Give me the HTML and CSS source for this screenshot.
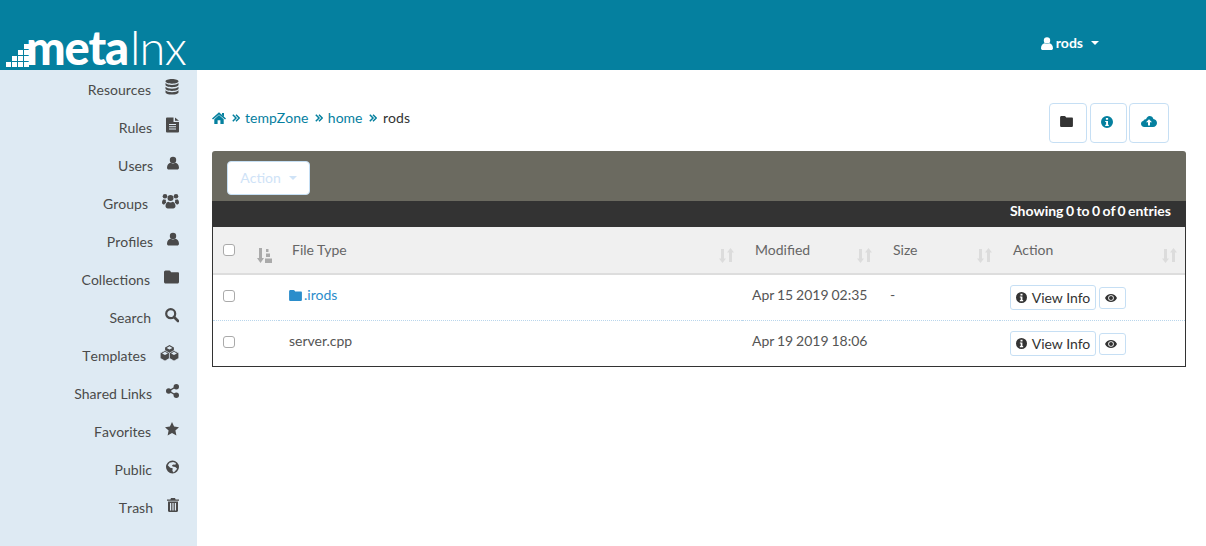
FILE: index.html
```html
<!DOCTYPE html>
<html lang="en">
<head>
<meta charset="utf-8">
<title>Metalnx</title>
<link rel="stylesheet" href="styles.css">
</head>
<body>
<svg class="defs" aria-hidden="true">
  <symbol id="i-db" viewBox="0 0 14 16"><path d="M7 0C3.2 0 .5 1 .5 2.3S3.2 4.7 7 4.7s6.500-1.100 6.500-2.400S10.800 0 7 0zM.5 4v1.800C.5 7.100 3.200 8.200 7 8.200s6.500-1.100 6.500-2.400V4C12.500 5.300 10 6 7 6S1.500 5.300.5 4zm0 3.700v1.800c0 1.300 2.700 2.400 6.500 2.400s6.500-1.100 6.500-2.400V7.700c-1 1.300-3.500 2-6.500 2s-5.500-.7-6.500-2zm0 3.600v1.900c0 1.300 2.700 2.400 6.500 2.400s6.500-1.100 6.500-2.400v-1.900c-1 1.300-3.500 2-6.500 2s-5.500-.7-6.500-2z"/></symbol>
  <symbol id="i-doc" viewBox="0 0 13 15"><path fill-rule="evenodd" d="M1 0h6.500v4.500H13V14a1 1 0 0 1-1 1H1a1 1 0 0 1-1-1V1a1 1 0 0 1 1-1zm8 0l4 3.200H9zM3 6.500v1h7v-1zm0 2.300v1h7v-1zm0 2.300v1h7v-1z"/></symbol>
  <symbol id="i-user" viewBox="0 0 12 13"><circle cx="6" cy="3.400" r="3.200"/><path d="M0 11.200C0 8.300 1.800 6.700 3.600 6.300c1.400 1 3.400 1 4.800 0C10.200 6.700 12 8.300 12 11.200c0 1.100-.8 1.800-1.800 1.800H1.800C.8 13 0 12.300 0 11.200z"/></symbol>
  <symbol id="i-group" viewBox="0 0 17 15"><circle cx="3" cy="2.700" r="2.300"/><circle cx="14" cy="2.700" r="2.300"/><circle cx="8.500" cy="4.500" r="3"/><path d="M0 9c0-2 1-3 2-3.300.6.500 1.200.7 2 .6-.3 1-.3 2 .3 2.900C3.300 9.800 2.700 10.300 2.300 11 1 11 0 10.500 0 9zM17 9c0-2-1-3-2-3.300-.6.500-1.200.7-2 .6.300 1 .3 2-.3 2.900 1 .6 1.600 1.100 2 1.800 1.300 0 2.300-.5 2.300-2zM3.500 12.500c0-2.300 1.300-3.800 2.700-4.300 1.400 1 3.200 1 4.600 0 1.400.5 2.700 2 2.700 4.300 0 1.500-1 2.500-2.300 2.500H5.800c-1.300 0-2.300-1-2.300-2.500z"/></symbol>
  <symbol id="i-folder" viewBox="0 0 14 12"><path d="M1.500 0h3.300c.7 0 1.200.4 1.500 1l.4.600h6.300c.5 0 1 .5 1 1v8c0 .8-.6 1.400-1.400 1.400H1.500C.7 12 0 11.400 0 10.600V1.500C0 .7.700 0 1.500 0z"/></symbol>
  <symbol id="i-search" viewBox="0 0 14 14"><circle cx="5.700" cy="5.700" r="4.500" fill="none" stroke="currentColor" stroke-width="2.200"/><path d="M9 9l4 4" stroke="currentColor" stroke-width="2.600" stroke-linecap="round"/></symbol>
  <symbol id="i-cubes" viewBox="0 0 19 16">
    <path d="M9.500 0l4.400 2.500v5L9.500 10 5.100 7.500v-5z"/>
    <path d="M5 5.500l4.600 2.600v5.200L5 16 .2 13.300V8.100z" stroke="#deeaf3" stroke-width=".7"/>
    <path d="M14 5.500l4.800 2.600v5.200L14 16l-4.600-2.700V8.100z" stroke="#deeaf3" stroke-width=".7"/>
    <path d="M9.500 1.300l2.900 1.600-2.900 1.700-2.900-1.700zM5 6.800l2.900 1.600L5 10.100 2.100 8.400zM14 6.800l2.900 1.600-2.900 1.700-2.900-1.700z" fill="#deeaf3"/>
  </symbol>
  <symbol id="i-share" viewBox="0 0 13 14"><circle cx="2.700" cy="7" r="2.700"/><circle cx="10.300" cy="2.700" r="2.700"/><circle cx="10.300" cy="11.300" r="2.700"/><path d="M2.700 7l7.600-4.300M2.700 7l7.600 4.300" stroke="currentColor" stroke-width="1.400"/></symbol>
  <symbol id="i-star" viewBox="0 0 14 14"><path d="M7 0l2.100 4.600 4.900.6-3.600 3.400 1 4.900L7 11.100 2.600 13.500l1-4.900L0 5.200l4.900-.6z"/></symbol>
  <symbol id="i-globe" viewBox="0 0 13 13"><path fill-rule="evenodd" d="M6.500 0a6.500 6.500 0 1 1 0 13 6.500 6.500 0 0 1 0-13zM3.600 2.200L1.800 4.700l2.400 2.500 2.500.6-.3 2.600 1.400 1.500 3.400-3.700-1.900-1.700-2.700-.6-.6-1.100 1.500-.9 1.900.4.500-1.700-2.800-1z"/></symbol>
  <symbol id="i-trash" viewBox="0 0 12 14"><path fill-rule="evenodd" d="M4 0h4l.6 1.500H12v1.300H0V1.500h3.400zM1 3.600h10v9.200c0 .7-.5 1.200-1.200 1.200H2.200C1.500 14 1 13.500 1 12.800zm2 1.500v7.300h1.200V5.100zm2.400 0v7.300h1.200V5.100zm2.400 0v7.300H9V5.100z"/></symbol>
  <symbol id="i-home" viewBox="0 0 14 12"><path d="M7 .3l7 6.200-1 1.100-6-5.200-6 5.200-1-1.100zM2.300 7.200L7 3.100l4.700 4.100V12H8.400V8.300H5.600V12H2.300zM10 1h2v3.500l-2-1.700z"/></symbol>
  <symbol id="i-angles" viewBox="0 0 8 8"><path d="M.8.800L4 4 .8 7.200M4 .8L7.200 4 4 7.200" fill="none" stroke="currentColor" stroke-width="1.500"/></symbol>
  <symbol id="i-info" viewBox="0 0 12 12"><path fill-rule="evenodd" d="M6 0a6 6 0 1 1 0 12A6 6 0 0 1 6 0zM4.900 2v1.800h2.200V2zM4.200 5v1.100h.9v2.700h-.9V10h3.600V8.800h-.8V5z"/></symbol>
  <symbol id="i-upload" viewBox="0 0 16 11"><path fill-rule="evenodd" d="M8.500 0c2 0 3.500 1.300 3.900 3.100C14.500 3.300 16 4.800 16 7c0 2.300-1.700 4-4 4H3.300C1.400 11 0 9.500 0 7.800 0 6.300 1 5 2.500 4.700 2.900 3.500 4 3 5 3.200 5.700 1.300 7 0 8.500 0zM8 3.200L5 6.300h2V9.500h2V6.300h2z"/></symbol>
  <symbol id="i-eye" viewBox="0 0 12 8"><path fill-rule="evenodd" d="M6 0c2.600 0 4.800 1.600 6 4-1.200 2.400-3.400 4-6 4S1.200 6.400 0 4c1.200-2.400 3.400-4 6-4zM6 1.200a2.800 2.800 0 1 0 0 5.600 2.800 2.800 0 0 0 0-5.600z"/><circle cx="6" cy="4" r="2"/></symbol>
  <symbol id="i-sort" viewBox="0 0 15 15"><path d="M2 1h3v9.500h2L3.500 15 0 10.500h2zM11.500 0L15 4.500h-2V14h-3V4.500H8z"/></symbol>
  <symbol id="i-sortalpha" viewBox="0 0 15 15"><path d="M2 0h3v10h2l-3.500 5L0 10h2zM9 1h2.500v3H9zM9 5.500h4v3.500H9zM8 10.500h7V15H8z"/></symbol>
</svg>

<header class="topbar">
  <a class="logo" href="#">
    <svg class="logo-steps" viewBox="0 0 25 23" aria-hidden="true">
      <path d="M18 0h7v5h-7zM12 6h5v5h-5zM18 6h5v5h-5zM6 12h5v5H6zM12 12h5v5h-5zM18 12h5v5h-5zM0 18h5v5H0zM6 18h5v5H6zM12 18h5v5h-5zM18 18h5v5h-5z"/>
    </svg>
    <span class="logo-bold">meta</span><span class="logo-thin">lnx</span>
  </a>
  <a class="user-menu" href="#">
    <svg class="ic-user-top"><use href="#i-user"/></svg>
    <span>rods</span>
    <span class="caret caret-white"></span>
  </a>
</header>

<div class="layout">
  <nav class="sidebar">
    <a class="nav-item" href="#">Resources<svg class="ni w14"><use href="#i-db"/></svg></a>
    <a class="nav-item" href="#">Rules<svg class="ni w13"><use href="#i-doc"/></svg></a>
    <a class="nav-item" href="#">Users<svg class="ni w12"><use href="#i-user"/></svg></a>
    <a class="nav-item" href="#">Groups<svg class="ni w17"><use href="#i-group"/></svg></a>
    <a class="nav-item" href="#">Profiles<svg class="ni w12"><use href="#i-user"/></svg></a>
    <a class="nav-item" href="#">Collections<svg class="ni w15"><use href="#i-folder"/></svg></a>
    <a class="nav-item" href="#">Search<svg class="ni w14"><use href="#i-search"/></svg></a>
    <a class="nav-item" href="#">Templates<svg class="ni w19"><use href="#i-cubes"/></svg></a>
    <a class="nav-item" href="#">Shared Links<svg class="ni w13"><use href="#i-share"/></svg></a>
    <a class="nav-item" href="#">Favorites<svg class="ni w14"><use href="#i-star"/></svg></a>
    <a class="nav-item" href="#">Public<svg class="ni w13"><use href="#i-globe"/></svg></a>
    <a class="nav-item" href="#">Trash<svg class="ni w12"><use href="#i-trash"/></svg></a>
  </nav>

  <main class="content">
    <div class="top-row">
      <div class="crumbs">
        <svg class="ic-home"><use href="#i-home"/></svg>
        <svg class="ic-angles"><use href="#i-angles"/></svg>
        <a href="#">tempZone</a>
        <svg class="ic-angles"><use href="#i-angles"/></svg>
        <a href="#">home</a>
        <svg class="ic-angles"><use href="#i-angles"/></svg>
        <span class="crumb-current">rods</span>
      </div>
      <div class="tools">
        <button class="tool t1" type="button"><svg class="ic-t-folder"><use href="#i-folder"/></svg></button>
        <button class="tool t2" type="button"><svg class="ic-t-info"><use href="#i-info"/></svg></button>
        <button class="tool t3" type="button"><svg class="ic-t-upload"><use href="#i-upload"/></svg></button>
      </div>
    </div>

    <div class="panel">
      <div class="panel-bar">
        <button class="action-btn" type="button">Action <span class="caret caret-pale"></span></button>
      </div>
      <div class="panel-info">Showing 0 to 0 of 0 entries</div>
      <table class="files">
        <colgroup>
          <col class="c-check"><col class="c-type"><col class="c-mod"><col class="c-size"><col class="c-act">
        </colgroup>
        <thead>
          <tr>
            <th><div class="th-in th-check"><input type="checkbox" class="check"><svg class="sort sort-on"><use href="#i-sortalpha"/></svg></div></th>
            <th><div class="th-in">File Type<svg class="sort"><use href="#i-sort"/></svg></div></th>
            <th><div class="th-in">Modified<svg class="sort"><use href="#i-sort"/></svg></div></th>
            <th><div class="th-in">Size<svg class="sort"><use href="#i-sort"/></svg></div></th>
            <th><div class="th-in">Action<svg class="sort"><use href="#i-sort"/></svg></div></th>
          </tr>
        </thead>
        <tbody>
          <tr>
            <td class="td-check"><input type="checkbox" class="check"></td>
            <td><a class="dir" href="#"><svg class="ic-dir"><use href="#i-folder"/></svg>.irods</a></td>
            <td class="td-date">Apr 15 2019 02:35</td>
            <td>-</td>
            <td class="td-act"><div class="acts"><button class="btn-info" type="button"><svg class="ic-b-info"><use href="#i-info"/></svg>View Info</button><button class="btn-eye" type="button"><svg class="ic-b-eye"><use href="#i-eye"/></svg></button></div></td>
          </tr>
          <tr>
            <td class="td-check"><input type="checkbox" class="check"></td>
            <td>server.cpp</td>
            <td class="td-date">Apr 19 2019 18:06</td>
            <td></td>
            <td class="td-act"><div class="acts"><button class="btn-info" type="button"><svg class="ic-b-info"><use href="#i-info"/></svg>View Info</button><button class="btn-eye" type="button"><svg class="ic-b-eye"><use href="#i-eye"/></svg></button></div></td>
          </tr>
        </tbody>
      </table>
    </div>
  </main>
</div>
</body>
</html>
```

FILE: styles.css
```css
* { box-sizing: border-box; }
html, body { margin: 0; height: 546px; overflow: hidden; }
body { font: 14px/20px Lato, "Open Sans", sans-serif; color: #333; background: #fff; }
a { text-decoration: none; color: inherit; }
svg { fill: currentColor; display: block; flex: none; }
.defs { width: 0; height: 0; position: absolute; }

.topbar { height: 70px; background: #05809f; color: #fff; display: flex; justify-content: space-between; padding: 0 106px 0 6px; }
.logo { display: flex; align-items: flex-end; height: 70px; }
.logo-steps { width: 25px; height: 23px; margin-bottom: 3px; margin-right: -5px; }
.logo-bold { font: 900 47px/46px Lato, sans-serif; letter-spacing: -1.1px; height: 46px; }
.logo-thin { font: 300 47px/46px Lato, sans-serif; letter-spacing: -.8px; height: 46px; margin-left: 2px; }
.user-menu { display: flex; align-items: center; height: 86px; font-size: 14px; font-weight: 700; transform: translateX(-1px); }
.ic-user-top { width: 12px; height: 13px; margin-right: 3px; }
.caret { display: inline-block; width: 0; height: 0; border-left: 4.500px solid transparent; border-right: 4.500px solid transparent; border-top: 4.500px solid currentColor; }
.caret-white { margin-left: 8px; }

.layout { display: flex; height: 476px; }
.sidebar { width: 197px; flex: none; background: #deeaf3; color: #4a4a4a; font-kerning: none; padding: 1px 18px 0 0; display: flex; flex-direction: column; }
.nav-item { height: 38px; display: flex; align-items: center; justify-content: flex-end; gap: 14px; }
.ni { height: 16px; transform: translateY(-3px); }
.w12 { width: 12px; } .w13 { width: 13px; } .w14 { width: 14px; } .w15 { width: 15px; } .w17 { width: 17px; } .w19 { width: 19px; }

.content { flex: 1; min-width: 0; padding: 33px 20px 0 15px; }
.top-row { display: flex; justify-content: space-between; align-items: flex-start; padding-right: 17px; }
.crumbs { display: flex; align-items: center; margin-top: 5px; color: #05809f; font-kerning: none; }
.crumbs a { margin-right: 6.500px; }
.ic-home { width: 14px; height: 12px; margin-right: 6px; }
.ic-angles { width: 8px; height: 8px; margin-right: 5px; }
.crumb-current { color: #333; margin-left: 1px; }
.tools { display: flex; gap: 3px; }
.tool { height: 40px; padding: 0 0 3px; background: #fff; border: 1px solid #c6dff4; border-radius: 4px; display: flex; align-items: center; justify-content: center; }
.t1 { width: 38px; color: #333; padding-right: 3px; }
.t2 { width: 37px; color: #05809f; margin-right: -1px; padding-right: 4px; }
.t3 { width: 40px; color: #05809f; padding-right: 1px; }
.ic-t-folder { width: 13px; height: 11px; }
.ic-t-info { width: 12px; height: 12px; }
.ic-t-upload { width: 16px; height: 11px; }

.panel { margin-top: 8px; }
.panel-bar { height: 50px; background: #6b6a60; border-radius: 3px 3px 0 0; padding: 10px 15px; }
.action-btn { width: 83px; height: 34px; padding: 0 0 2px; background: #fff; border: 1px solid #c6dff4; border-radius: 4px; font: 14px Lato, sans-serif; font-kerning: none; color: #cfe3f7; display: flex; align-items: center; justify-content: center; gap: 8px; }
.caret-pale { border-width: 4px; border-bottom-width: 0; margin-top: 2px; }
.panel-info { height: 26px; background: #333; color: #fff; font-weight: 700; word-spacing: -1px; line-height: 20px; text-align: right; padding: 0 15px 6px 0; }

.files { width: 974px; table-layout: fixed; border-collapse: separate; border-spacing: 0; border-left: 1px solid #333; border-right: 1px solid #333; border-bottom: 1px solid #333; color: #555; }
.c-check { width: 66px; } .c-type { width: 463px; } .c-mod { width: 138px; } .c-size { width: 120px; } .c-act { width: 185px; }
th { height: 48px; padding: 0; background: #f0f0f0; border-bottom: 2px solid #ddd; font-weight: 400; text-align: left; color: #666; }
.th-in { display: flex; justify-content: space-between; height: 20px; padding: 0 8px 0 13px; }
.th-check { padding-left: 10px; padding-right: 7px; align-items: center; }
.sort { width: 15px; height: 15px; color: #dcdcdc; transform: translateY(8px); }
.sort-on { color: #aaa; transform: translateY(5px); }
td { height: 46px; padding: 0 10px 5px; border-bottom: 1px dotted #b9d6ec; }
tbody tr:last-child td { border-bottom: 0; height: 45px; }
.td-check { padding-bottom: 3px; }
.td-act { padding-bottom: 0; }
.td-date { word-spacing: -.7px; }
.check { appearance: none; -webkit-appearance: none; display: block; width: 12px; height: 12px; margin: 0; background: #fff; border: 1px solid #aaa; border-radius: 3px; }
.dir { color: #2b8dcb; display: flex; align-items: center; }
.ic-dir { width: 13px; height: 11px; margin-right: 2px; }
.acts { display: flex; align-items: center; gap: 3px; }
.btn-info { height: 25px; width: 86px; padding: 0; background: #fff; border: 1px solid #c6dff4; border-radius: 3px; font: 14px Lato, sans-serif; color: #333; display: flex; align-items: center; justify-content: center; gap: 5px; }
.ic-b-info { width: 11px; height: 11px; }
.btn-eye { height: 22px; width: 27px; padding: 0 3px 0 0; background: #fff; border: 1px solid #c6dff4; border-radius: 3px; color: #333; display: flex; align-items: center; justify-content: center; }
.ic-b-eye { width: 12px; height: 8px; }
```
